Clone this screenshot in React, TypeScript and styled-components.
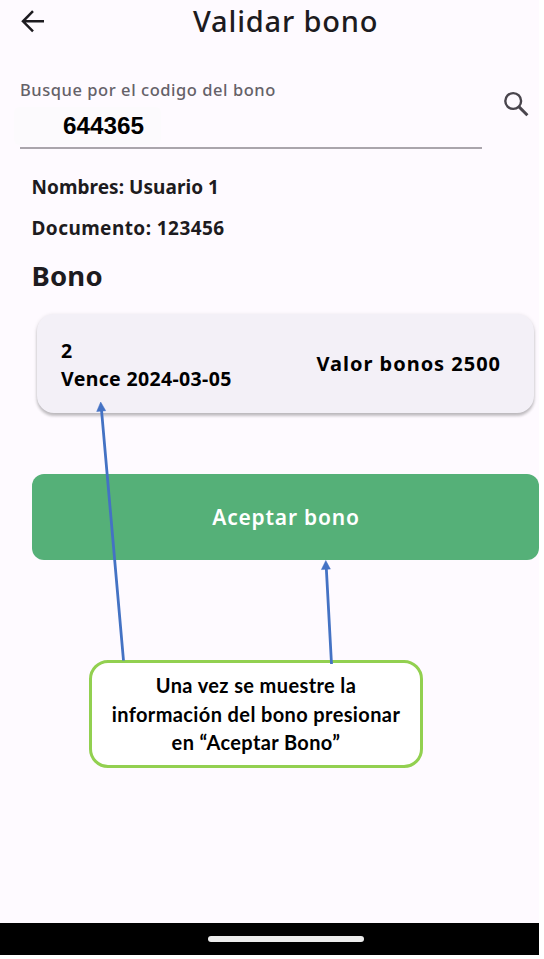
import React from 'react';
import styled, { createGlobalStyle } from 'styled-components';

const GlobalStyle = createGlobalStyle`
  * { box-sizing: border-box; }
  body { margin: 0; background: #fff; }
`;

const Stage = styled.div`
  position: relative;
  width: 544px;
  height: 959px;
  overflow: hidden;
  background: #fff;
`;

const Phone = styled.main`
  display: flex;
  flex-direction: column;
  width: 539px;
  height: 955px;
  background: #fefaff;
  color: #1d1b20;
  font-family: 'Noto Sans', sans-serif;
  white-space: nowrap;
`;

const TopBar = styled.header`
  display: grid;
  grid-template-columns: 64px 1fr 32px;
  align-items: center;
  height: 44px;
  padding-left: 17px;
`;

const Title = styled.h1`
  margin: 0;
  padding: 0 0 2px 112px;
  font-size: 29px;
  font-weight: 500;
  line-height: 42px;
  letter-spacing: 0.82px;
`;

const SearchRow = styled.section`
  display: flex;
  justify-content: space-between;
  height: 106px;
  padding: 32px 8px 0 20px;
`;

const Field = styled.div`
  width: 462px;
  height: 73px;
  border-bottom: 2px solid #aaa5ac;
`;

const FieldLabel = styled.div`
  height: 31px;
  font-size: 16.5px;
  font-weight: 500;
  line-height: 27px;
  letter-spacing: 0.55px;
  color: #656168;
`;

const FieldValue = styled.div`
  width: 147px;
  height: 38px;
  margin-left: -6px;
  padding-left: 49px;
  border-radius: 6px;
  background: #fcfafd;
  color: #000;
  font: 700 24.3px/37px 'Liberation Sans', sans-serif;
`;

const IconButton = styled.button`
  display: flex;
  align-items: center;
  justify-content: center;
  width: 30px;
  height: 30px;
  padding: 0;
  border: 0;
  background: none;
`;

const SearchButton = styled(IconButton)`
  margin-top: 13px;
`;

const Details = styled.section`
  display: flex;
  flex-direction: column;
  height: 164px;
  padding: 17px 0 0 31.5px;
`;

const Detail = styled.p<{ $spacing: number }>`
  margin: 0;
  height: 41px;
  font-size: 19px;
  font-weight: 700;
  line-height: 41px;
  letter-spacing: ${(p) => p.$spacing}px;
`;

const SectionTitle = styled.h2`
  margin: 0;
  padding-top: 2px;
  font-size: 27.5px;
  font-weight: 700;
  line-height: 50px;
  letter-spacing: 0.2px;
`;

const BonusCard = styled.section`
  display: flex;
  align-items: center;
  justify-content: space-between;
  width: 497px;
  height: 99px;
  margin-left: 37px;
  padding: 2px 34px 0 24px;
  border-radius: 17px;
  background: #f3f0f7;
  box-shadow: 0 3px 3px rgba(0, 0, 0, 0.2), 0 1px 4px rgba(0, 0, 0, 0.12);
  color: #000;
  font-weight: 700;
`;

const BonusInfo = styled.div`
  font-size: 19.5px;
  line-height: 28px;
  letter-spacing: 0.35px;
`;

const BonusValue = styled.div`
  margin-right: -1px;
  padding-bottom: 2px;
  font-size: 20px;
  letter-spacing: 0.98px;
`;

const AcceptButton = styled.button`
  width: 507px;
  height: 86px;
  margin: 61px 0 0 32px;
  padding: 0 0 0 1px;
  border: 0;
  border-radius: 12px;
  background: #55b078;
  color: #fff;
  font: 600 21px/86px 'Noto Sans', sans-serif;
  letter-spacing: 0.78px;
`;

const SystemBar = styled.footer`
  display: flex;
  align-items: center;
  justify-content: center;
  height: 32px;
  margin-top: auto;
  padding-left: 32px;
  background: #000;
`;

const HomeHandle = styled.div`
  width: 156px;
  height: 6px;
  border-radius: 3px;
  background: #ececec;
`;

/* Annotation layer drawn over the phone screen */
const Callout = styled.aside`
  position: absolute;
  left: 89px;
  top: 660px;
  width: 334px;
  height: 108px;
  padding-top: 8px;
  border: 3px solid #92d050;
  border-radius: 19px;
  background: #fff;
  color: #000;
  font: 700 20px/28.6px Lato, sans-serif;
  letter-spacing: 0.38px;
  text-align: center;
  white-space: nowrap;
`;

const Arrows = styled.svg`
  position: absolute;
  inset: 0;
  pointer-events: none;
`;

export default function App() {
  return (
    <>
      <GlobalStyle />
      <Stage>
        <Phone>
          <TopBar>
            <IconButton aria-label="Volver">
              <svg width="24" height="24" viewBox="0 0 24 24" fill="none" stroke="#1d1b20" strokeWidth="2.5">
                <path d="M13 1.2 3 11.3l10 10M3 11.3h21" />
              </svg>
            </IconButton>
            <Title>Validar bono</Title>
          </TopBar>
          <SearchRow>
            <Field>
              <FieldLabel>Busque por el codigo del bono</FieldLabel>
              <FieldValue>644365</FieldValue>
            </Field>
            <SearchButton aria-label="Buscar">
              <svg width="26" height="26" viewBox="0 0 26 26" fill="none" stroke="#49454d">
                <circle cx="10.2" cy="10" r="7.9" strokeWidth="2.4" />
                <path d="m15.8 15.6 8.6 8.6" strokeWidth="3" />
              </svg>
            </SearchButton>
          </SearchRow>
          <Details>
            <Detail $spacing={0.05}>Nombres: Usuario 1</Detail>
            <Detail $spacing={0.43}>Documento: 123456</Detail>
            <SectionTitle>Bono</SectionTitle>
          </Details>
          <BonusCard>
            <BonusInfo>
              <div>2</div>
              <div>Vence 2024-03-05</div>
            </BonusInfo>
            <BonusValue>Valor bonos 2500</BonusValue>
          </BonusCard>
          <AcceptButton>Aceptar bono</AcceptButton>
          <SystemBar>
            <HomeHandle />
          </SystemBar>
        </Phone>
        <Callout>
          Una vez se muestre la
          <br />
          información del bono presionar
          <br />
          en “Aceptar Bono”
        </Callout>
        <Arrows width="544" height="959" viewBox="0 0 544 959" fill="#4472c4" stroke="#4472c4">
          <path d="M123.5 660.5 101.5 410M331.5 664 326.3 568" strokeWidth="2.8" />
          <path d="m100.7 402 5 8.7-9 .8ZM325.8 560.5l4.6 8.6-9 .5Z" strokeWidth=".5" />
        </Arrows>
      </Stage>
    </>
  );
}
